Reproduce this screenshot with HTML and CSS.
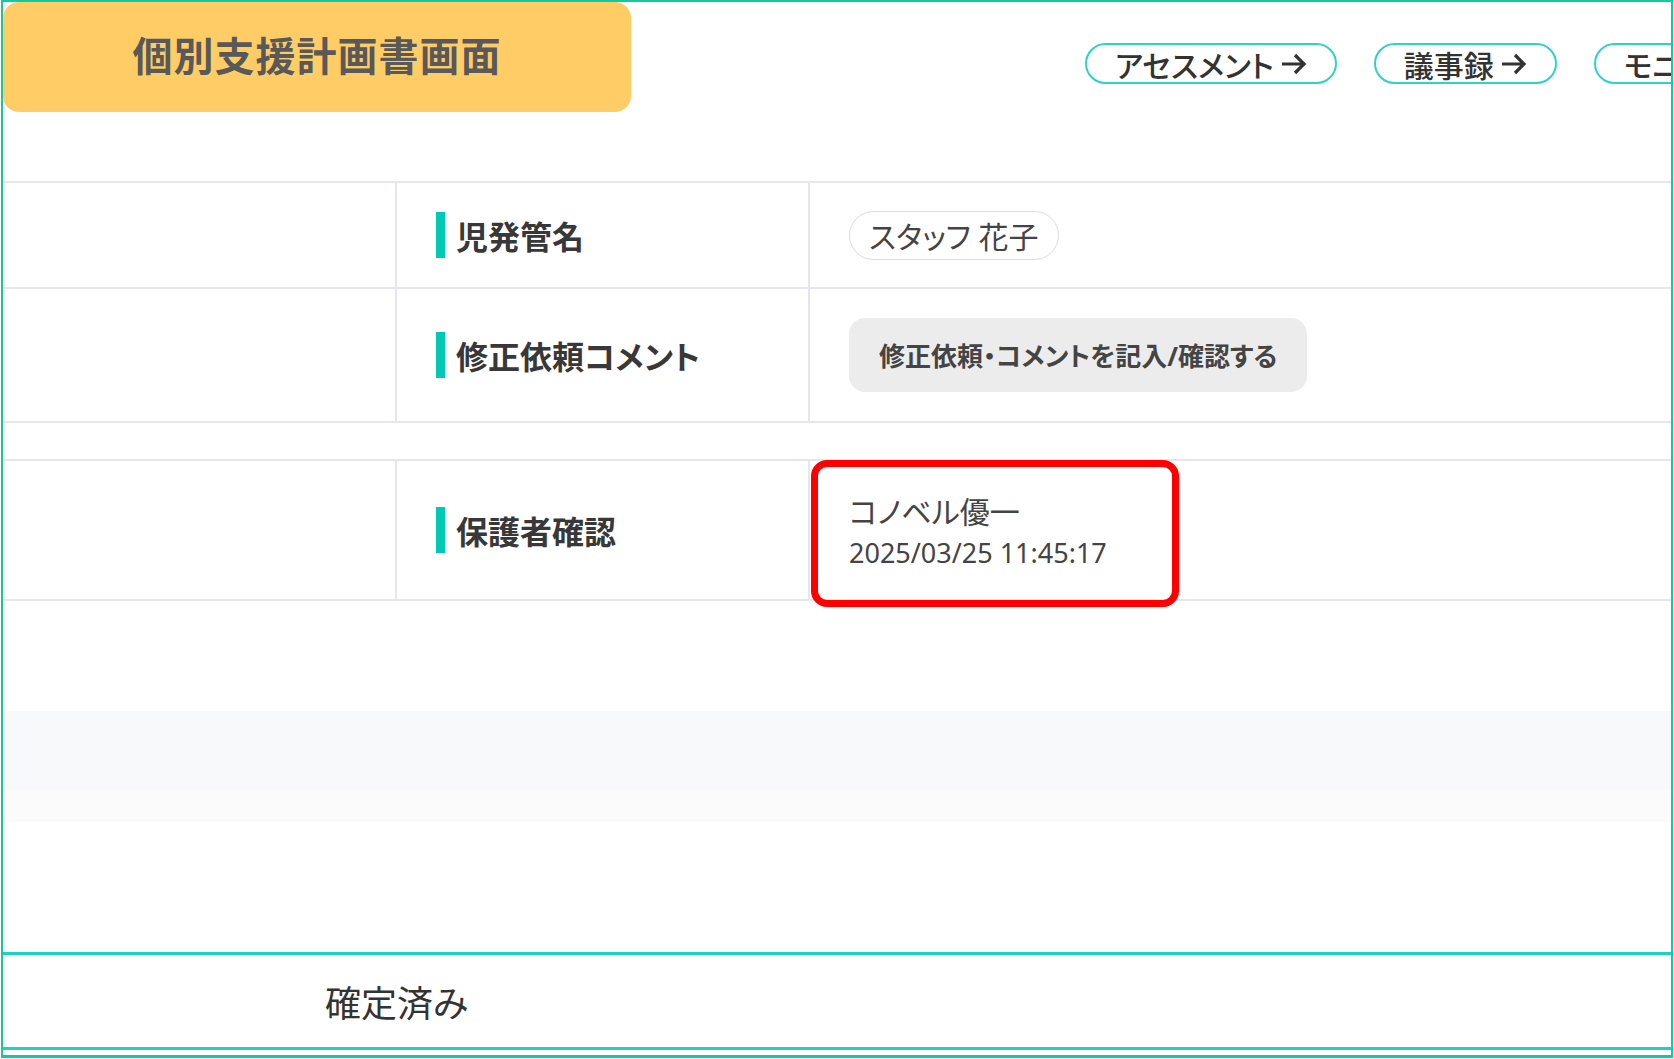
FILE: index.html
```html
<!DOCTYPE html>
<html lang="ja">
<head>
  <meta charset="UTF-8" />
  <meta name="viewport" content="width=device-width, initial-scale=1.0"/>
  <title>個別支援計画書画面</title>
  <link rel="stylesheet" href="styles.css">
</head>
<body>
  <div class="frame">
    <div class="header">
      <div class="page-title">個別支援計画書画面</div>
      <nav class="links">
        <a class="link-btn">アセスメント
          <svg class="arrow" viewBox="0 0 28 22"><path d="M2 11H25M15 2l9 9-9 9" /></svg>
        </a>
        <a class="link-btn">議事録
          <svg class="arrow" viewBox="0 0 28 22"><path d="M2 11H25M15 2l9 9-9 9" /></svg>
        </a>
        <a class="link-btn">モニタリング
          <svg class="arrow" viewBox="0 0 28 22"><path d="M2 11H25M15 2l9 9-9 9" /></svg>
        </a>
      </nav>
    </div>

    <div class="table">
      <div class="row row-staff">
        <div class="cell-blank"></div>
        <div class="cell-label"><span class="mark"></span>児発管名</div>
        <div class="cell-value"><span class="pill">スタッフ 花子</span></div>
      </div>
      <div class="row row-comment">
        <div class="cell-blank"></div>
        <div class="cell-label"><span class="mark"></span>修正依頼コメント</div>
        <div class="cell-value"><button class="gray-btn">修正依頼・コメントを記入/確認する</button></div>
      </div>
    </div>

    <div class="table-gap"></div>

    <div class="table">
      <div class="row row-guardian">
        <div class="cell-blank"></div>
        <div class="cell-label"><span class="mark"></span>保護者確認</div>
        <div class="cell-value">
          <div class="confirm">
            <div class="confirm-name">コノベル優一</div>
            <div class="confirm-date">2025/03/25 11:45:17</div>
          </div>
          <!-- annotation highlight -->
          <div class="highlight"></div>
        </div>
      </div>
    </div>

    <div class="spacer-a"></div>
    <div class="band-1"></div>
    <div class="band-2"></div>
    <div class="spacer-b"></div>

    <div class="status-bar">
      <span class="status">確定済み</span>
    </div>
  </div>
</body>
</html>
```

FILE: styles.css
```css
body {
  margin: 0;
  background: #fff;
  font-family: "Noto Sans", "Noto Sans CJK JP", sans-serif;
  color: #333;
  font-feature-settings: "palt";
}
.frame {
  width: 1672px;
  margin-left: 1px;
  border: 2px solid #14c99b;
  border-bottom-width: 3px;
  box-sizing: border-box;
  overflow: hidden;
  padding-bottom: 5px;
}
.header {
  display: flex;
  align-items: flex-start;
  height: 179px;
}
.page-title {
  flex-shrink: 0;
  width: 628px;
  height: 110px;
  background: #ffcc66;
  border-radius: 16px;
  color: #595959;
  font-size: 40px;
  font-weight: 700;
  letter-spacing: 1px;
  display: flex;
  align-items: center;
  justify-content: center;
  padding-bottom: 6px;
  box-sizing: border-box;
}
.links {
  display: flex;
  gap: 37px;
  margin-left: 454px;
  margin-top: 41px;
  flex-shrink: 0;
}
.link-btn {
  display: flex;
  align-items: center;
  gap: 6px;
  height: 41px;
  padding: 0 27px 0 28px;
  border: 2px solid #2ed3c2;
  border-radius: 22px;
  font-size: 30px;
  font-weight: 500;
  color: #333;
  white-space: nowrap;
  box-sizing: border-box;
}
.arrow {
  width: 28px;
  height: 22px;
  fill: none;
  stroke: #333;
  stroke-width: 3.2;
}
.table {
  border-top: 2px solid #e6e7ee;
}
.row {
  display: grid;
  grid-template-columns: 394px 413px 1fr;
  border-bottom: 2px solid #e6e7ee;
}
.row-staff { height: 104px; }
.row-comment { height: 132px; }
.row-guardian { height: 138px; }
.cell-blank,
.cell-label {
  border-right: 2px solid #e6e7ee;
}
.cell-label {
  display: flex;
  align-items: center;
  padding-left: 39px;
  font-size: 32px;
  font-weight: 700;
  color: #383838;
}
.mark {
  width: 9px;
  height: 46px;
  background: #00c9b5;
  margin-right: 11px;
}
.cell-value {
  position: relative;
  display: flex;
  align-items: center;
  padding-left: 39px;
}
.pill {
  display: inline-flex;
  align-items: center;
  height: 49px;
  padding: 0 19px;
  border: 1px solid #dcdcdc;
  border-radius: 25px;
  font-size: 30px;
  color: #444;
  box-sizing: border-box;
}
.gray-btn {
  height: 74px;
  padding: 0 30px;
  border: none;
  border-radius: 16px;
  background: #ececec;
  font-family: inherit;
  font-feature-settings: "palt";
  font-size: 26px;
  font-weight: 700;
  color: #444;
}
.table-gap {
  height: 36px;
}
.confirm {
  padding-top: 2px;
}
.confirm-name {
  font-size: 30px;
  line-height: 40px;
  color: #444;
}
.confirm-date {
  font-size: 27px;
  line-height: 34px;
  color: #444;
  margin-top: 4px;
}
.highlight {
  position: absolute;
  left: 1px;
  top: -1px;
  width: 368px;
  height: 147px;
  border: 7px solid #ff0000;
  border-radius: 16px;
  box-sizing: border-box;
}
.spacer-a { height: 110px; }
.band-1 { height: 79px; background: #f8f9fb; }
.band-2 { height: 32px; background: #fbfbfc; }
.spacer-b { height: 130px; }
.status-bar {
  height: 92px;
  border-top: 3px solid #1fd1c0;
  border-bottom: 3px solid #1fd1c0;
  display: flex;
  align-items: center;
  padding-left: 322px;
}
.status {
  font-size: 36px;
  color: #333;
}
```
